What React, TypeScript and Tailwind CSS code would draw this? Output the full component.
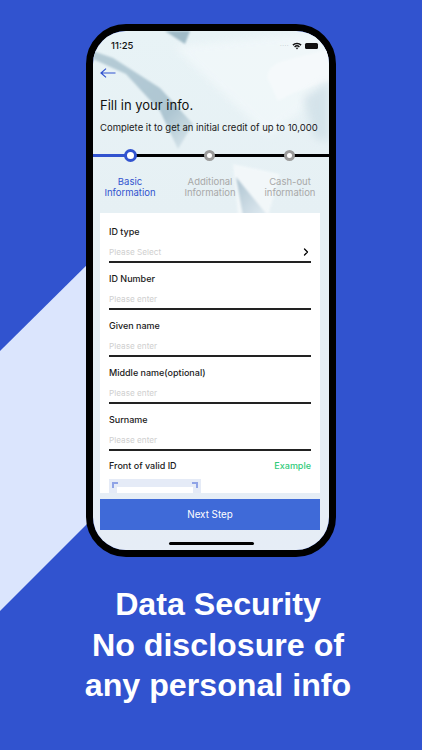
import React from 'react'
import { ChevronRight } from 'lucide-react'

const fields = [
    { label: 'ID type', hint: 'Please Select', arrow: true },
    { label: 'ID Number', hint: 'Please enter' },
    { label: 'Given name', hint: 'Please enter' },
    { label: 'Middle name(optional)', hint: 'Please enter' },
    { label: 'Surname', hint: 'Please enter' },
]

const steps = [
    { top: 'Basic', bottom: 'Information', active: true },
    { top: 'Additional', bottom: 'Information' },
    { top: 'Cash-out', bottom: 'information' },
]

// abstract glass shapes behind the form
function ScreenArt() {
    return (
        <svg className="absolute inset-0 w-full h-full" viewBox="0 0 236 519" preserveAspectRatio="none">
            <defs>
                <linearGradient id="sky" x1="0" y1="0" x2="0" y2="1">
                    <stop offset="0" stopColor="#e8f3f6" />
                    <stop offset="0.35" stopColor="#e6f0f4" />
                    <stop offset="1" stopColor="#e6edf6" />
                </linearGradient>
                <linearGradient id="streak" x1="0" y1="0" x2="1" y2="1">
                    <stop offset="0" stopColor="#b6ccd6" />
                    <stop offset="0.7" stopColor="#aec6d2" />
                    <stop offset="1" stopColor="#dce9ee" />
                </linearGradient>
                <linearGradient id="patch" x1="0" y1="0" x2="1" y2="1">
                    <stop offset="0" stopColor="#aec4d1" />
                    <stop offset="1" stopColor="#e3edf3" />
                </linearGradient>
                <filter id="soft" x="-20%" y="-20%" width="140%" height="140%">
                    <feGaussianBlur stdDeviation="1.2" />
                </filter>
                <filter id="softer" x="-20%" y="-20%" width="140%" height="140%">
                    <feGaussianBlur stdDeviation="4" />
                </filter>
            </defs>
            <rect width="236" height="519" fill="url(#sky)" />
            <path d="M80 15 L236 0 L236 60 L175 105 Z" fill="#f2f8fa" opacity="0.8" filter="url(#softer)" />
            <path d="M0 20 L20 27 L67 57 L100 93 L85 118 L67 80 L33 43 L0 28 Z" fill="url(#streak)" filter="url(#soft)" />
            <path d="M72 0 L97 0 L92 13 Z" fill="#a0bbc7" filter="url(#soft)" />
            <path d="M174 46 Q176 34 190 30 L236 18 L236 50 L200 62 L185 70 Z" fill="#f5f9fb" filter="url(#soft)" />
            <path d="M210 67 L236 50 L236 110 L222 108 Z" fill="#d3e2e9" opacity="0.9" filter="url(#softer)" />
            <path d="M140 133 L187 143 L175 185 L145 185 Z" fill="#f5f9fb" opacity="0.8" filter="url(#soft)" />
            <path d="M143 146 L175 185 L150 185 Z" fill="url(#patch)" filter="url(#soft)" />
        </svg>
    )
}

function ScanCorner({ className }: { className: string }) {
    return <div className={`w-[6px] h-[6px] border-[#8fa3e6] ${className}`} />
}

export default function App() {
    return (
        <div className="relative w-[422px] h-[750px] overflow-hidden bg-[#3153cf] [font-family:Inter,sans-serif]">
            {/* pale band behind the phone */}
            <svg className="absolute inset-0" width="422" height="750" viewBox="0 0 422 750">
                <polygon points="0,351 100,252 100,511 0,611" fill="#dbe5fd" />
            </svg>

            <div className="relative flex flex-col items-center pt-[24px]">
                {/* phone */}
                <div className="relative w-[250px] h-[533px] border-[7px] border-black rounded-[40px] overflow-hidden flex flex-col">
                    <ScreenArt />
                    <div className="relative flex flex-col h-full">
                        {/* status bar */}
                        <div className="h-[29px] pt-[1px] pl-[18px] pr-[11px] flex items-center justify-between">
                            <span className="text-[9.5px] font-medium leading-none text-[#111]">11:25</span>
                            <div className="flex items-center gap-[3px]">
                                <span className="text-[6px] leading-none tracking-[0.5px] text-[#aab4b8]">····</span>
                                <svg width="10" height="8" viewBox="0 0 10 8">
                                    <path d="M0.4 2.6 A6.6 6.6 0 0 1 9.6 2.6 L8.6 3.7 A5.2 5.2 0 0 0 1.4 3.7 Z" fill="#111" />
                                    <path d="M2.1 4.4 A4.2 4.2 0 0 1 7.9 4.4 L6.9 5.4 A2.8 2.8 0 0 0 3.1 5.4 Z" fill="#111" />
                                    <path d="M3.8 6.1 A1.8 1.8 0 0 1 6.2 6.1 L5 7.5 Z" fill="#111" />
                                </svg>
                                <div className="w-[13px] h-[6px] rounded-[1.5px] bg-[#111]" />
                            </div>
                        </div>

                        {/* back arrow */}
                        <div className="pl-[7px] pt-[7px] h-[26px]">
                            <svg width="16" height="12" viewBox="0 0 16 12" fill="none" stroke="#3153cf" strokeWidth="1.2">
                                <path d="M15.5 6 H1 M6 1.6 L1 6 L6 10.4" />
                            </svg>
                        </div>

                        <h1 className="mt-[11px] pl-[7px] text-[13px] leading-[16px] font-normal text-[#111]">Fill in your info.</h1>
                        <p className="mt-[8px] pl-[7px] text-[9.5px] leading-[14px] text-[#1a1a1a] whitespace-nowrap">Complete it to get an initial credit of up to 10,000</p>

                        {/* stepper */}
                        <div className="mt-[14px] h-[13px] relative flex items-center">
                            <div className="w-[32px] h-[3px] bg-[#3153cf]" />
                            <div className="flex-1 h-[3px] bg-black" />
                            <div className="absolute left-[31px] top-0 w-[13px] h-[13px] rounded-full border-[3px] border-[#3153cf] bg-white" />
                            <div className="absolute left-[111px] top-[1px] w-[11px] h-[11px] rounded-full border-[3px] border-[#9a9a9a] bg-white" />
                            <div className="absolute left-[191px] top-[1px] w-[11px] h-[11px] rounded-full border-[3px] border-[#9a9a9a] bg-white" />
                        </div>
                        <div className="mt-[15px] ml-[-3px] grid w-[240px] grid-cols-3 text-center text-[9.5px] leading-[10.5px]">
                            {steps.map(s => (
                                <div key={s.top} className={s.active ? 'text-[#3153cf]' : 'text-[#a8a8a8]'}>
                                    <div>{s.top}</div>
                                    <div>{s.bottom}</div>
                                </div>
                            ))}
                        </div>

                        {/* form card */}
                        <div className="mt-[15px] ml-[7px] w-[220px] h-[280px] overflow-hidden bg-white px-[9px] pt-[13px]">
                            {fields.map(f => (
                                <div key={f.label} className="h-[47px]">
                                    <div className="text-[9px] leading-[12px] font-medium text-[#1a1a1a]">{f.label}</div>
                                    <div className="mt-[6px] h-[15px] flex items-center justify-between">
                                        <span className="text-[8.2px] leading-[12px] text-[#cfcfcf]">{f.hint}</span>
                                        {f.arrow && <ChevronRight size={12} strokeWidth={2.6} className="text-black -mr-[1px]" />}
                                    </div>
                                    <div className="mt-[2px] h-[2px] bg-[#222]" />
                                </div>
                            ))}
                            <div className="flex items-center justify-between text-[9px] leading-[12px] -mt-[1px]">
                                <span className="font-medium text-[#1a1a1a]">Front of valid ID</span>
                                <span className="font-medium text-[#2fcb7a]">Example</span>
                            </div>
                            <div className="mt-[7px] w-[92px] h-[30px] bg-[#e5ebf7] px-[3px] pt-[3px] flex justify-between relative">
                                <div className="absolute left-[8px] right-[8px] top-[8px] bottom-0 bg-white" />
                                <ScanCorner className="relative border-t-[2px] border-l-[2px]" />
                                <ScanCorner className="relative border-t-[2px] border-r-[2px]" />
                            </div>
                        </div>

                        {/* next step */}
                        <button className="mt-[6px] ml-[7px] w-[220px] h-[31px] pt-[2px] bg-[#3f6ad8] text-white text-[9.8px]">Next Step</button>

                        {/* home indicator */}
                        <div className="mt-[12px] mx-auto w-[85px] h-[3px] rounded-full bg-black" />
                    </div>
                </div>

                {/* caption */}
                <div className="mt-[27px] ml-[14px] text-center text-white font-bold text-[32.2px] leading-[40.5px] [font-family:'Liberation_Sans',Arial,sans-serif]">
                    <div>Data Security</div>
                    <div>No disclosure of</div>
                    <div>any personal info</div>
                </div>
            </div>
        </div>
    )
}
